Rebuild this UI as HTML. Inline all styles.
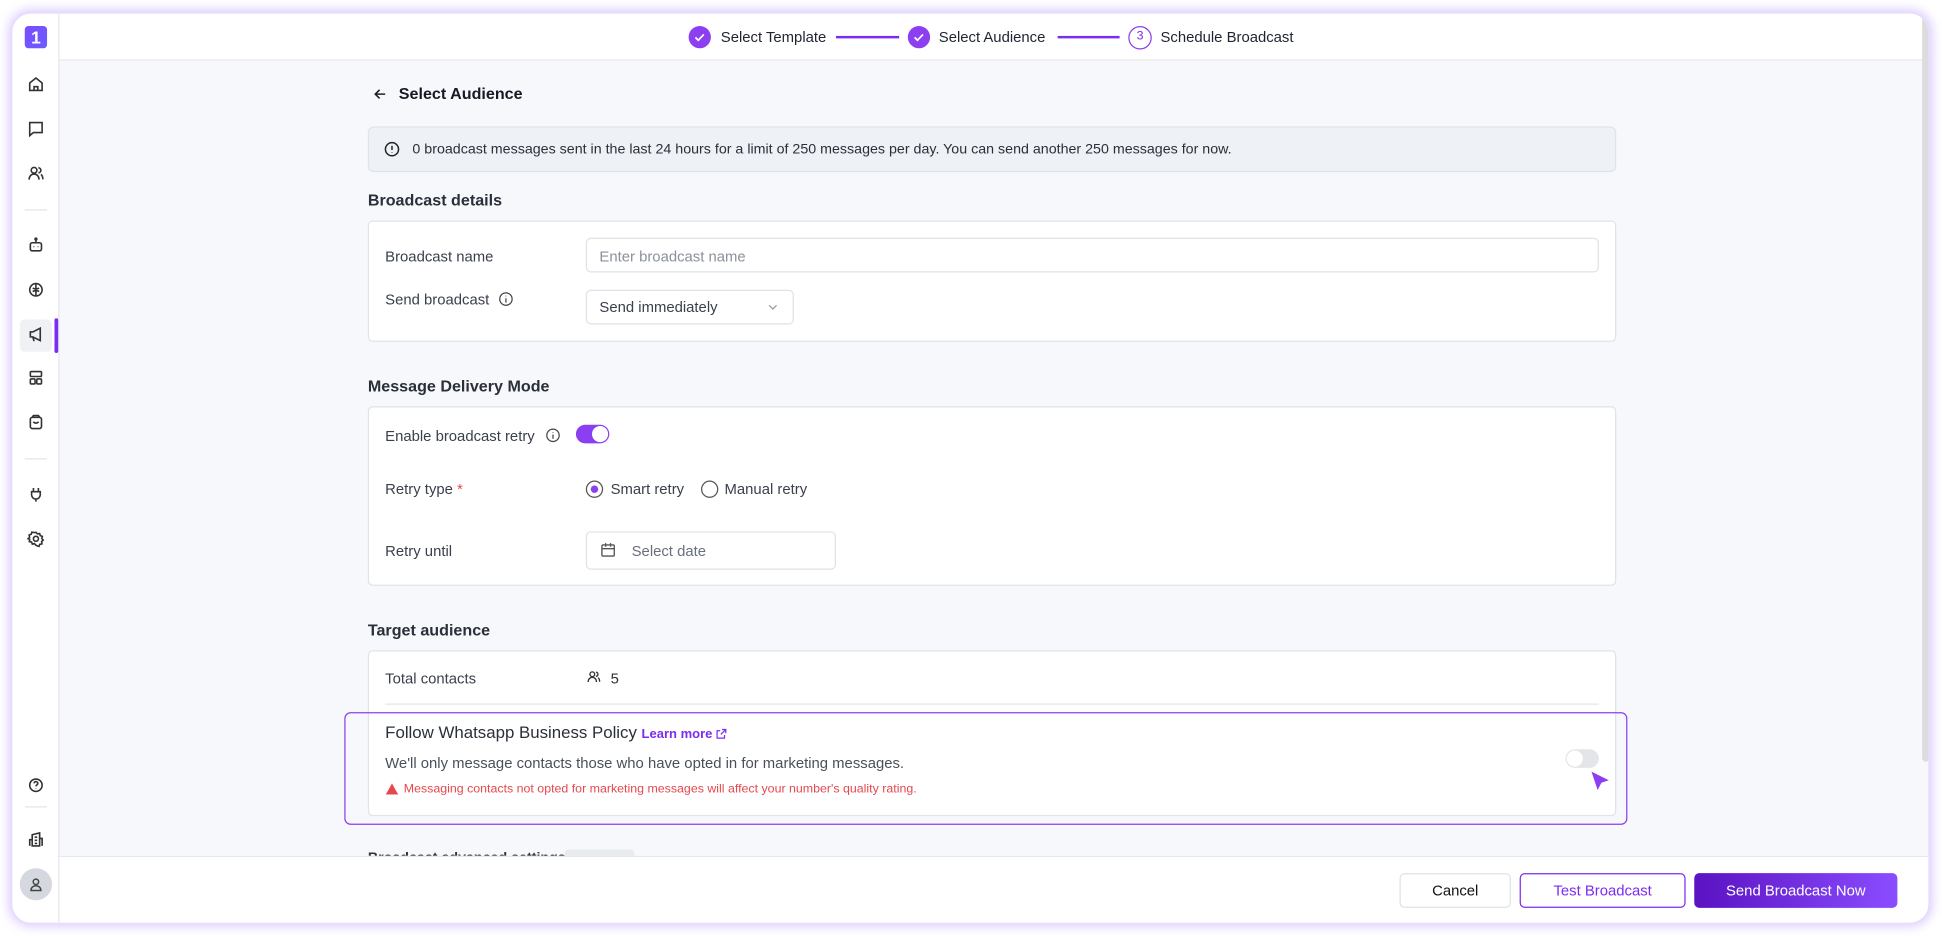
<!DOCTYPE html>
<html><head><meta charset="utf-8">
<style>
*{box-sizing:border-box;margin:0;padding:0}
html,body{width:1942px;height:936px;overflow:hidden;background:#fff}
body{font-family:"Liberation Sans",sans-serif;color:#1f2430}
#w{position:absolute;left:0;top:0;width:1568px;height:756px;transform:scale(1.2385);transform-origin:0 0}
.a{position:absolute}
.card{position:absolute;left:9px;top:10px;width:1549px;height:736px;border-radius:16px;background:#f6f8fb;box-shadow:0 0 8px 2px rgba(160,110,255,.35);border:1px solid #e6dcfb;overflow:hidden}
.side{position:absolute;left:0;top:0;width:38px;height:100%;background:#fff;border-right:1px solid #e6e8ee;z-index:5}
.top{position:absolute;left:38px;top:0;right:0;height:38px;background:#fff;border-bottom:1px solid #e6e8ee}
.ic{position:absolute;left:10px;width:18px;height:18px}
.sep{position:absolute;left:10px;width:18px;height:1px;background:#e3e5ea}
.t{position:absolute;white-space:nowrap;font-size:12px;line-height:14px}
.h{font-weight:bold;font-size:13px;color:#2a2f3a}
.box{position:absolute;background:#fff;border:1px solid #e0e3e9;border-radius:4px}
.inp{position:absolute;background:#fff;border:1px solid #dfe2e8;border-radius:4px}
.lab{color:#3a404c}
.btn{position:absolute;height:28px;border-radius:4px;font-size:12px;text-align:center;line-height:26px}
</style></head><body><div id="w">
<div class="card">
 <div class="side">
  <div class="a" style="left:10px;top:10px;width:18px;height:18px;border-radius:3px;background:linear-gradient(135deg,#7b4dff,#6a5cff);color:#fff;font-weight:bold;font-size:14px;line-height:18px;text-align:center">1</div>
  <svg class="ic" style="top:48px" viewBox="0 0 18 18" fill="none" stroke="#333" stroke-width="1.3"><path d="M4 8l5-4 5 4v6H4z M7.5 14v-3h3v3"/></svg>
  <svg class="ic" style="top:84px" viewBox="0 0 18 18" fill="none" stroke="#333" stroke-width="1.3"><path d="M4 4h10v8H7l-3 2.5z"/></svg>
  <svg class="ic" style="top:120px" viewBox="0 0 18 18" fill="none" stroke="#333" stroke-width="1.3"><circle cx="7.5" cy="6.5" r="2.3"/><path d="M3.5 14c0-3 2-4.5 4-4.5s4 1.5 4 4.5M11 4.5a2 2 0 010 4M13 9.8c1 .6 1.6 2 1.6 4"/></svg>
  <div class="sep" style="top:158px"></div>
  <svg class="ic" style="top:178px" viewBox="0 0 18 18" fill="none" stroke="#333" stroke-width="1.3"><rect x="4.5" y="7" width="9" height="6.5" rx="1.5"/><path d="M9 7V4.5"/><circle cx="9" cy="4" r=".7"/><path d="M7.3 10v.5M10.7 10v.5"/></svg>
  <svg class="ic" style="top:214px" viewBox="0 0 18 18" fill="none" stroke="#333" stroke-width="1.3"><circle cx="9" cy="9" r="5"/><path d="M9 4v10M6.5 7.5c1 1 4 1 5 0M6.5 10.5c1-1 4-1 5 0"/></svg>
  <div class="a" style="left:6px;top:247px;width:26px;height:26px;border-radius:4px;background:#f0f1f5"></div>
  <div class="a" style="left:34px;top:246px;width:3px;height:28px;background:#7a2cf0;border-radius:2px"></div>
  <svg class="ic" style="top:250px" viewBox="0 0 18 18" fill="none" stroke="#333" stroke-width="1.3"><path d="M4.5 7v4h2l6 3V4l-6 3zM6.5 11l1 3.5"/></svg>
  <svg class="ic" style="top:285px" viewBox="0 0 18 18" fill="none" stroke="#333" stroke-width="1.3"><rect x="4.5" y="4" width="9" height="4" rx=".8"/><rect x="4.5" y="10" width="3.8" height="4" rx=".8"/><rect x="9.7" y="10" width="3.8" height="4" rx=".8"/></svg>
  <svg class="ic" style="top:321px" viewBox="0 0 18 18" fill="none" stroke="#333" stroke-width="1.3"><rect x="4.5" y="5" width="9" height="9" rx="1.5"/><path d="M6 5l1-1.5h4L12 5M7 8.5c.6 1.5 3.4 1.5 4 0"/></svg>
  <div class="sep" style="top:359px"></div>
  <svg class="ic" style="top:379px" viewBox="0 0 18 18" fill="none" stroke="#333" stroke-width="1.3"><path d="M7 4v3M11 4v3M5.5 7h7v2.5a3.5 3.5 0 01-7 0zM9 13v2"/></svg>
  <svg class="ic" style="top:415px" viewBox="0 0 18 18" fill="none" stroke="#333" stroke-width="1.3"><circle cx="9" cy="9" r="2"/><path d="M9 3.8l1.2 1.3 1.8-.3.5 1.7 1.7.6-.4 1.8 1.1 1.2-1.3 1.2.3 1.8-1.8.4-.6 1.7-1.7-.5L9 14.2l-1.2-1.3-1.7.5-.6-1.7-1.8-.4.3-1.8L2.7 9l1.2-1.2-.4-1.8 1.7-.6.5-1.7 1.8.3z"/></svg>
  <svg class="ic" style="top:614px" viewBox="0 0 18 18" fill="none" stroke="#333" stroke-width="1.3"><circle cx="9" cy="9" r="5"/><path d="M7.5 7.5a1.5 1.5 0 113 .2c0 1-1.5 1.2-1.5 2.2M9 11.8v.3"/></svg>
  <div class="sep" style="top:640px"></div>
  <svg class="ic" style="top:658px" viewBox="0 0 18 18" fill="none" stroke="#333" stroke-width="1.3"><path d="M6 14V5l6-1.5V14zM4 14V9h2M12 8h2v6M8 7h2M8 9.5h2M8 12h2"/></svg>
  <div class="a" style="left:6px;top:690px;width:26px;height:26px;border-radius:50%;background:#d5d8de"></div>
  <svg class="ic" style="top:694px" viewBox="0 0 18 18" fill="none" stroke="#444" stroke-width="1.2"><circle cx="9" cy="7" r="2.2"/><path d="M5 14c0-2.5 2-3.8 4-3.8s4 1.3 4 3.8z"/></svg>
 </div>
 <div class="top">
  <div class="a" style="left:508px;top:10px;width:18px;height:18px;border-radius:50%;background:#8b3ff0"></div>
  <svg class="a" style="left:508px;top:10px" width="18" height="18" viewBox="0 0 18 18" fill="none" stroke="#fff" stroke-width="1.4"><path d="M5.5 9.2l2.3 2.3 4.5-4.7"/></svg>
  <div class="t" style="left:534px;top:12px;font-size:12px;color:#1f2430">Select Template</div>
  <div class="a" style="left:627px;top:18px;width:51px;height:1.5px;background:#7a2cf0"></div>
  <div class="a" style="left:685px;top:10px;width:18px;height:18px;border-radius:50%;background:#8b3ff0"></div>
  <svg class="a" style="left:685px;top:10px" width="18" height="18" viewBox="0 0 18 18" fill="none" stroke="#fff" stroke-width="1.4"><path d="M5.5 9.2l2.3 2.3 4.5-4.7"/></svg>
  <div class="t" style="left:710px;top:12px;color:#1f2430">Select Audience</div>
  <div class="a" style="left:806px;top:18px;width:50px;height:1.5px;background:#7a2cf0"></div>
  <div class="a" style="left:863px;top:10px;width:19px;height:19px;border-radius:50%;border:1.5px solid #8b3ff0;color:#7a2cf0;font-size:10px;line-height:16px;text-align:center">3</div>
  <div class="t" style="left:889px;top:12px;color:#1f2430">Schedule Broadcast</div>
 </div>
 <div class="a" style="left:1542px;top:1px;width:6px;height:603px;background:#dcdcdc;border-radius:3px"></div>

 <svg class="a" style="left:291px;top:59px" width="12" height="12" viewBox="0 0 12 12" fill="none" stroke="#222" stroke-width="1.3"><path d="M10 6H2M5.5 2.5L2 6l3.5 3.5"/></svg>
 <div class="t h" style="left:312px;top:58px;color:#151a24">Select Audience</div>

 <div class="a" style="left:287px;top:91px;width:1008px;height:37px;background:#eef1f5;border:1px solid #e0e4ea;border-radius:5px"></div>
 <svg class="a" style="left:300px;top:103px" width="13" height="13" viewBox="0 0 13 13" fill="none" stroke="#222" stroke-width="1.2"><circle cx="6.5" cy="6.5" r="5.3"/><path d="M6.5 3.8v3.3M6.5 8.8v.4"/></svg>
 <div class="t" style="left:323px;top:103px;font-size:11.5px;color:#2a2f3a">0 broadcast messages sent in the last 24 hours for a limit of 250 messages per day. You can send another 250 messages for now.</div>

 <div class="t h" style="left:287px;top:144px">Broadcast details</div>
 <div class="box" style="left:287px;top:167px;width:1008px;height:98px"></div>
 <div class="t lab" style="left:301px;top:189px">Broadcast name</div>
 <div class="inp" style="left:463px;top:181px;width:818px;height:28px"></div>
 <div class="t" style="left:474px;top:189px;color:#8a909b">Enter broadcast name</div>
 <div class="t lab" style="left:301px;top:224px">Send broadcast</div>
 <svg class="a" style="left:392px;top:224px" width="13" height="13" viewBox="0 0 13 13" fill="none" stroke="#444" stroke-width="1"><circle cx="6.5" cy="6.5" r="5"/><path d="M6.5 5.8v3.5M6.5 3.8v.5"/></svg>
 <div class="inp" style="left:463px;top:223px;width:168px;height:28px"></div>
 <div class="t" style="left:474px;top:230px;color:#3a404c">Send immediately</div>
 <svg class="a" style="left:609px;top:232px" width="10" height="10" viewBox="0 0 10 10" fill="none" stroke="#999" stroke-width="1"><path d="M2 3.5l3 3 3-3"/></svg>

 <div class="t h" style="left:287px;top:294px">Message Delivery Mode</div>
 <div class="box" style="left:287px;top:317px;width:1008px;height:145px"></div>
 <div class="t lab" style="left:301px;top:334px">Enable broadcast retry</div>
 <svg class="a" style="left:430px;top:334px" width="13" height="13" viewBox="0 0 13 13" fill="none" stroke="#444" stroke-width="1"><circle cx="6.5" cy="6.5" r="5"/><path d="M6.5 5.8v3.5M6.5 3.8v.5"/></svg>
 <div class="a" style="left:455px;top:332px;width:27px;height:15px;border-radius:8px;background:#8b3ff0"></div>
 <div class="a" style="left:468px;top:333px;width:13px;height:13px;border-radius:50%;background:#fff"></div>
 <div class="t lab" style="left:301px;top:377px">Retry type <span style="color:#e5484d">*</span></div>
 <div class="a" style="left:463px;top:377px;width:14px;height:14px;border-radius:50%;border:1.2px solid #555"></div>
 <div class="a" style="left:467px;top:381px;width:6px;height:6px;border-radius:50%;background:#8b3ff0"></div>
 <div class="t lab" style="left:483px;top:377px">Smart retry</div>
 <div class="a" style="left:556px;top:377px;width:14px;height:14px;border-radius:50%;border:1.2px solid #555"></div>
 <div class="t lab" style="left:575px;top:377px">Manual retry</div>
 <div class="t lab" style="left:301px;top:427px">Retry until</div>
 <div class="inp" style="left:463px;top:418px;width:202px;height:31px"></div>
 <svg class="a" style="left:474px;top:426px" width="14" height="14" viewBox="0 0 14 14" fill="none" stroke="#555" stroke-width="1.1"><rect x="2" y="3" width="10" height="9" rx="1"/><path d="M2 6h10M5 1.5v3M9 1.5v3"/></svg>
 <div class="t" style="left:500px;top:427px;color:#6a707b">Select date</div>

 <div class="t h" style="left:287px;top:491px">Target audience</div>
 <div class="box" style="left:287px;top:514px;width:1008px;height:134px"></div>
 <div class="t lab" style="left:301px;top:530px">Total contacts</div>
 <svg class="a" style="left:462px;top:528px" width="15" height="15" viewBox="0 0 18 18" fill="none" stroke="#333" stroke-width="1.3"><circle cx="7.5" cy="6.5" r="2.3"/><path d="M3.5 14c0-3 2-4.5 4-4.5s4 1.5 4 4.5M11 4.5a2 2 0 010 4M13 9.8c1 .6 1.6 2 1.6 4"/></svg>
 <div class="t" style="left:483px;top:530px;color:#333">5</div>
 <div class="a" style="left:301px;top:557px;width:980px;height:1px;background:#e3e5ea"></div>
 <div class="a" style="left:268px;top:564px;width:1036px;height:91px;border:1.5px solid #8b3ff0;border-radius:5px"></div>
 <div class="t" style="left:301px;top:574px;font-size:13.6px;color:#2a2f3a">Follow Whatsapp Business Policy <span style="font-size:10.5px;color:#7a2cf0;font-weight:bold">Learn more</span></div>
 <svg class="a" style="left:567px;top:576px" width="11" height="11" viewBox="0 0 11 11" fill="none" stroke="#7a2cf0" stroke-width="1"><path d="M6 2h3v3M9 2L5 6M8 6.5V9H2V3h2.5"/></svg>
 <div class="t" style="left:301px;top:598px;color:#4a505b">We'll only message contacts those who have opted in for marketing messages.</div>
 <svg class="a" style="left:301px;top:621px" width="11" height="10" viewBox="0 0 11 10"><path d="M5.5 0.5L10.5 9.5H0.5z" fill="#e5484d"/></svg>
 <div class="t" style="left:316px;top:620px;font-size:10px;color:#e5484d">Messaging contacts not opted for marketing messages will affect your number's quality rating.</div>
 <div class="a" style="left:1254px;top:594px;width:27px;height:15px;border-radius:8px;background:#e4e5e8"></div>
 <div class="a" style="left:1255px;top:595px;width:13px;height:13px;border-radius:50%;background:#fff"></div>
 <svg class="a" style="left:1274px;top:611px" width="16" height="17" viewBox="0 0 16 17"><path d="M1 1l14 7-6 2-3 6z" fill="#8b3ff0"/></svg>

 <div class="t h" style="left:287px;top:675px;color:#333;font-size:11.5px">Broadcast advanced settings</div>
 <div class="a" style="left:446px;top:675px;width:56px;height:14px;border-radius:3px;background:#e8eaee"></div>
 <div class="a" style="left:38px;top:680px;right:0;height:56px;background:#fff;border-top:1px solid #e6e8ee"></div>
 <div class="btn" style="left:1120px;top:694px;width:90px;border:1px solid #dfe2e8;background:#fff;color:#111">Cancel</div>
 <div class="btn" style="left:1217px;top:694px;width:134px;border:1.2px solid #7a2cf0;background:#fff;color:#7a2cf0">Test Broadcast</div>
 <div class="btn" style="left:1358px;top:694px;width:164px;background:linear-gradient(90deg,#5a12c2,#8a4dff);color:#fff;line-height:28px">Send Broadcast Now</div>
</div>
</div></body></html>
